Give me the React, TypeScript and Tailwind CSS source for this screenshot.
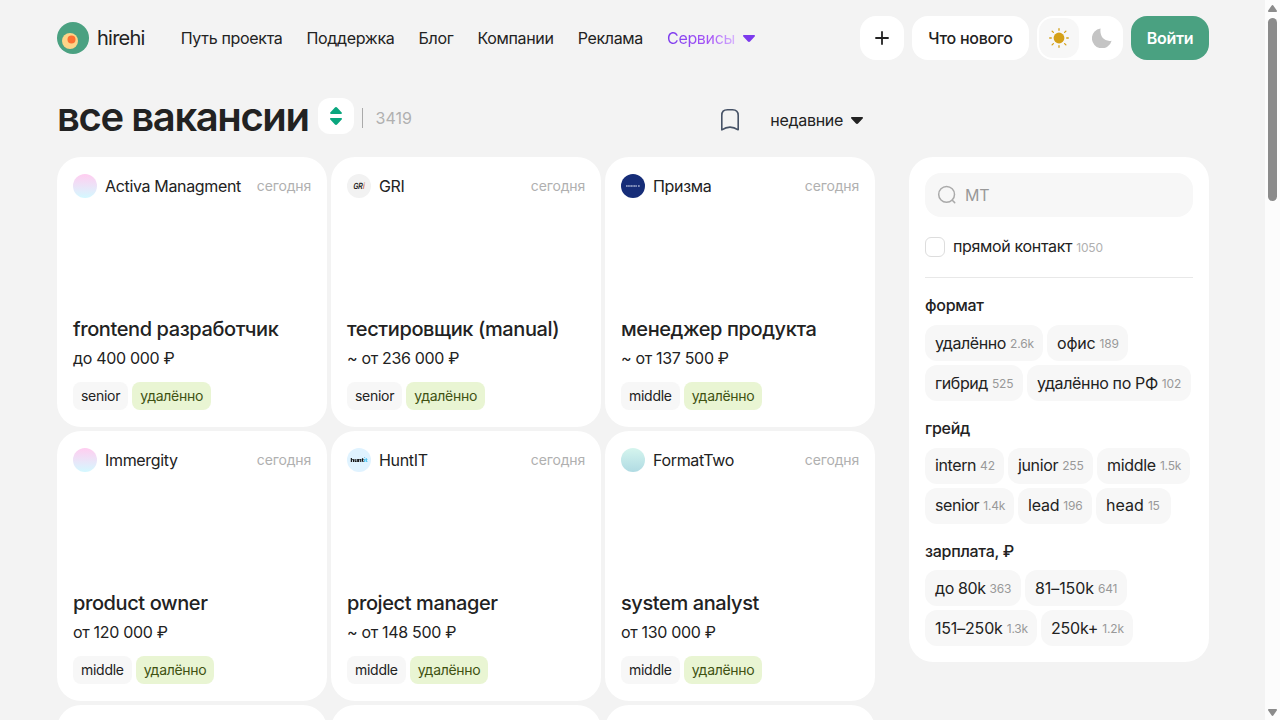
import type { ReactNode } from "react";

type Job = {
  company: string;
  logo: ReactNode;
  title: string;
  salary: string;
  grade: string;
};

type Option = { label: string; count: string; size: string };

const PinkLogo = () => (
  <div className="size-6 shrink-0 rounded-full bg-linear-to-b from-[#ffcdf0] to-[#d3f8ff]" />
);

const GriLogo = () => (
  <div className="flex size-6 shrink-0 items-center justify-center rounded-full bg-[#f2f2f2] font-['Liberation_Sans',sans-serif] text-[9px] leading-none font-bold tracking-[0px] text-[#222] italic">
    <span className="flex scale-x-[0.7] -skew-x-6">
      GR<span className="text-[#d26a4c]">i</span>
    </span>
  </div>
);

const PrizmaLogo = () => (
  <svg viewBox="0 0 24 24" className="size-6 shrink-0">
    <circle cx="12" cy="12" r="12" fill="#162d78" />
    <path d="M5 12h11M17 12h2" stroke="#a3aed0" strokeWidth="1.4" strokeDasharray="1.3 .3" />
  </svg>
);

const HuntLogo = () => (
  <div className="flex size-6 shrink-0 items-center justify-center rounded-full bg-[#e0f3ff] text-[6px] leading-none font-black tracking-[-0.2px] text-[#111]">
    <span className="flex scale-y-[0.85]">
      hunt<span className="text-[#4fc3f0]">it</span>
    </span>
  </div>
);

const MintLogo = () => (
  <div className="size-6 shrink-0 rounded-full bg-linear-to-b from-[#d5f5ee] to-[#b0dbe3]" />
);

const jobs: Job[] = [
  { company: "Activa Managment", logo: <PinkLogo />, title: "frontend разработчик", salary: "до 400 000 ₽", grade: "senior" },
  { company: "GRI", logo: <GriLogo />, title: "тестировщик (manual)", salary: "~ от 236 000 ₽", grade: "senior" },
  { company: "Призма", logo: <PrizmaLogo />, title: "менеджер продукта", salary: "~ от 137 500 ₽", grade: "middle" },
  { company: "Immergity", logo: <PinkLogo />, title: "product owner", salary: "от 120 000 ₽", grade: "middle" },
  { company: "HuntIT", logo: <HuntLogo />, title: "project manager", salary: "~ от 148 500 ₽", grade: "middle" },
  { company: "FormatTwo", logo: <MintLogo />, title: "system analyst", salary: "от 130 000 ₽", grade: "middle" },
];

const filters: { title: string; pills: string; options: Option[] }[] = [
  {
    title: "формат",
    pills: "mt-2",
    options: [
      { label: "удалённо", count: "2.6k", size: "w-[118px] tracking-[-0.42px]" },
      { label: "офис", count: "189", size: "w-[81px] tracking-[-0.2px]" },
      { label: "гибрид", count: "525", size: "w-[98px] tracking-[-0.42px]" },
      { label: "удалённо по РФ", count: "102", size: "w-[164px] tracking-[-0.36px]" },
    ],
  },
  {
    title: "грейд",
    pills: "mt-2",
    options: [
      { label: "intern", count: "42", size: "w-[79px] pb-0.5 tracking-[-0.4px]" },
      { label: "junior", count: "255", size: "w-[85px] pb-0.5 tracking-[-0.36px]" },
      { label: "middle", count: "1.5k", size: "w-[93px] pb-0.5 tracking-[-0.3px]" },
      { label: "senior", count: "1.4k", size: "w-[89px] pb-0.5 tracking-[-0.42px]" },
      { label: "lead", count: "196", size: "w-[74px] pb-0.5 tracking-[-0.2px]" },
      { label: "head", count: "15", size: "w-[75px] pb-0.5 tracking-[0.04px]" },
    ],
  },
  {
    title: "зарплата, ₽",
    pills: "mt-[7px]",
    options: [
      { label: "до 80k", count: "363", size: "w-24 tracking-[-0.4px]" },
      { label: "81–150k", count: "641", size: "w-[102px] tracking-[-0.08px]" },
      { label: "151–250k", count: "1.3k", size: "w-28 tracking-[-0.18px]" },
      { label: "250k+", count: "1.2k", size: "w-[92px] tracking-[-0.2px]" },
    ],
  },
];

const Caret = ({ className }: { className: string }) => (
  <svg viewBox="0 0 12 7" preserveAspectRatio="none" className={className} fill="currentColor">
    <path d="M1 0h10c.9 0 1.300 1 .7 1.600L7.300 6.300c-.7.8-1.900.8-2.600 0L.3 1.600C-.3 1 .1 0 1 0Z" />
  </svg>
);

function Header() {
  return (
    <header className="flex h-11 items-center">
      <a className="flex items-center">
        <svg viewBox="0 0 32 32" className="size-8">
          <circle cx="16" cy="16" r="16" fill="#4aa181" />
          <circle cx="13" cy="19" r="8" fill="#fed488" />
          <circle cx="14.500" cy="17.500" r="4" fill="#fd7131" />
        </svg>
        <span className="ml-2 text-[20px] leading-6 tracking-[-0.75px]">hirehi</span>
      </a>
      <nav className="ml-9 flex items-center gap-6 tracking-[-0.32px]">
        <a>Путь проекта</a>
        <a>Поддержка</a>
        <a>Блог</a>
        <a>Компании</a>
        <a>Реклама</a>
        <a className="flex items-center">
          <span className="bg-linear-to-r from-[#7c3aed] via-[#a855f7] via-65% to-[#d8b4fe] bg-clip-text text-transparent">
            Сервисы
          </span>
          <Caret className="ml-2 h-[7px] w-3 text-[#7c3aed]" />
        </a>
      </nav>
      <div className="ml-auto flex gap-2 font-medium">
        <button className="flex size-11 items-center justify-center rounded-2xl bg-white">
          <svg viewBox="0 0 14 14" className="size-3.5" stroke="#222" strokeWidth="1.8">
            <path d="M7 .3v13.400M.3 7h13.400" />
          </svg>
        </button>
        <button className="h-11 w-[117px] rounded-2xl bg-white">Что нового</button>
        <div className="flex h-11 w-[86px] items-center rounded-2xl bg-white pl-0.5">
          <div className="flex size-10 items-center justify-center rounded-[14px] bg-[#f7f7f7]">
            <svg viewBox="0 0 20 20" className="size-5" stroke="#d4a017" strokeWidth="1.300" strokeLinecap="round">
              <circle cx="10" cy="10" r="5.400" fill="#d4a017" stroke="none" />
              <path d="M10 .7v1.600M10 17.700v1.600M.7 10h1.600M17.700 10h1.600M3.100 3.100l1.300 1.300M15.600 15.600l1.300 1.300M3.100 16.900l1.300-1.300M15.600 4.400l1.300-1.300" />
            </svg>
          </div>
          <div className="flex h-10 flex-1 items-center justify-center pb-px pl-px">
            <svg viewBox="0 0 20 20" className="size-5" fill="#c4c4c4">
              <path d="M8.600.4C7.300 7.900 12 14.200 19.600 12.700A10 10 0 1 1 8.600.4Z" />
            </svg>
          </div>
        </div>
        <button className="h-11 w-[78px] rounded-2xl bg-[#4aa181] font-semibold text-white">Войти</button>
      </div>
    </header>
  );
}

function TitleBar() {
  return (
    <div className="flex h-[97px] w-[818px] items-start">
      <h1 className="mt-8 text-[40px] leading-[50px] font-semibold tracking-[-1.4px] whitespace-nowrap">все вакансии</h1>
      <button className="mt-[38px] ml-[9px] flex size-9 flex-col items-center justify-center gap-1 rounded-xl bg-white text-[#0aa67e]">
        <Caret className="h-[7px] w-3 rotate-180" />
        <Caret className="h-[7px] w-3" />
      </button>
      <div className="mt-12 ml-2 h-5 w-px bg-[#aaa]" />
      <span className="mt-[46px] ml-[13px] tracking-normal text-[#b0b0b0]">3419</span>
      <div className="mt-12 mr-3 ml-auto flex items-center tracking-[-0.3px]">
        <svg viewBox="0 0 20 24" className="mr-[30px] h-6 w-5" fill="none" stroke="#465266" strokeWidth="1.600" strokeLinejoin="round">
          <path d="M1.800 7.500C1.800 3.500 3.500 1.800 7.500 1.800h5c4 0 5.700 1.700 5.700 5.700v14.300c-5-3.300-11.400-3.300-16.400 0Z" />
        </svg>
        <span>недавние</span>
        <Caret className="ml-2 h-[7px] w-3" />
      </div>
    </div>
  );
}

function JobCard({ job }: { job: Job }) {
  return (
    <article className="flex h-[270px] flex-col rounded-3xl bg-white px-4 pt-[17px] pb-[17px]">
      <div className="flex h-6 items-center">
        {job.logo}
        <span className="ml-2 tracking-[-0.34px]">{job.company}</span>
        <span className="ml-auto text-sm tracking-[-0.16px] text-[#b0b0b0]">сегодня</span>
      </div>
      <h2 className="mt-auto text-xl leading-6 font-medium tracking-[-0.4px]">{job.title}</h2>
      <p className="mt-[5px] leading-6 tracking-[-0.32px]">{job.salary}</p>
      <div className="mt-3 flex gap-1 text-sm tracking-[-0.28px]">
        <span className="flex h-7 items-center rounded-lg bg-[#f7f7f7] px-2">{job.grade}</span>
        <span className="flex h-7 items-center rounded-lg bg-[#e9f5d3] px-2 text-[#3f5212]">удалённо</span>
      </div>
    </article>
  );
}

function Filters() {
  return (
    <aside className="h-[505px] w-[300px] rounded-3xl bg-white p-4">
      <div className="flex h-11 items-center rounded-2xl bg-[#f7f7f7] pl-3 text-[#999]">
        <svg viewBox="0 0 20 20" className="size-5" fill="none" stroke="#aaa" strokeWidth="1.500" strokeLinecap="round">
          <circle cx="9.600" cy="9.400" r="7.900" />
          <path d="m15.300 15.200 2.400 2.400" />
        </svg>
        <span className="ml-2">МТ</span>
      </div>
      <label className="mt-5 flex h-5 items-center">
        <span className="size-5 rounded-md border border-[#ddd] bg-white" />
        <span className="mb-0.5 ml-2 tracking-[-0.34px]">прямой контакт</span>
        <span className="mt-0.5 ml-1 text-xs tracking-[-0.12px] text-[#b0b0b0]">1050</span>
      </label>
      <div className="mt-5 h-px bg-[#e8e8e8]" />
      {filters.map((group) => (
        <section key={group.title} className="mt-[15px]">
          <h3 className="leading-6 font-medium">{group.title}</h3>
          <div className={`flex flex-wrap gap-1 ${group.pills}`}>
            {group.options.map((o) => (
              <button
                key={o.label}
                className={`flex h-9 items-center rounded-xl bg-[#f7f7f7] pl-2.5 whitespace-nowrap ${o.size}`}
              >
                {o.label}
                <span className="mt-0.5 ml-1 text-xs tracking-[-0.16px] text-[#999]">{o.count}</span>
              </button>
            ))}
          </div>
        </section>
      ))}
    </aside>
  );
}

export default function App() {
  return (
    <div className="flex h-[720px] w-[1280px] overflow-hidden bg-[#f3f3f3] font-['Inter',sans-serif] text-base leading-6 tracking-[-0.28px] text-[#222]">
      <div className="flex-1 px-14 pt-4">
        <div className="ml-px w-[1152px]">
          <Header />
          <TitleBar />
          <div className="flex items-start justify-between">
            <main className="grid grid-cols-[270px_270px_270px] gap-1">
              {jobs.map((job) => (
                <JobCard key={job.company} job={job} />
              ))}
              <div className="h-[270px] rounded-3xl bg-white" />
              <div className="h-[270px] rounded-3xl bg-white" />
              <div className="h-[270px] rounded-3xl bg-white" />
            </main>
            <Filters />
          </div>
        </div>
      </div>
      <div className="flex w-[15px] shrink-0 flex-col items-center bg-[#fcfcfc] pt-[5px] pb-1 text-[#8b8b8b]">
        <Caret className="h-[7px] w-[9px] rotate-180" />
        <div className="mt-1.5 h-[183px] w-[9px] rounded-full bg-[#8b8b8b]" />
        <Caret className="mt-auto h-[7px] w-[9px]" />
      </div>
    </div>
  );
}
